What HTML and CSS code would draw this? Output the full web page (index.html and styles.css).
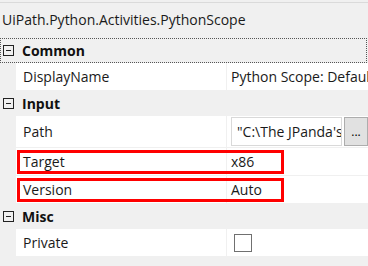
FILE: index.html
```html
<!DOCTYPE html>
<html lang="en">
<head>
    <meta charset="UTF-8">
    <title>Properties</title>
    <link rel="stylesheet" href="styles.css">
</head>
<body>
    <div class="panel">
        <div class="title">UiPath.Python.Activities.PythonScope</div>

        <div class="category focused">
            <span class="toggle"></span>
            <span class="cat-name">Common</span>
        </div>
        <div class="row">
            <div class="name">DisplayName</div>
            <div class="value">Python Scope: Default</div>
        </div>

        <div class="category">
            <span class="toggle"></span>
            <span class="cat-name">Input</span>
        </div>
        <div class="row row-tall">
            <div class="name">Path</div>
            <div class="value">
                <div class="textbox">"C:\The JPanda's</div>
                <button class="dots">...</button>
            </div>
        </div>
        <div class="row marked">
            <div class="name">Target</div>
            <div class="value">x86</div>
            <div class="highlight"></div>
        </div>
        <div class="row marked">
            <div class="name">Version</div>
            <div class="value">Auto</div>
            <div class="highlight"></div>
        </div>

        <div class="category">
            <span class="toggle"></span>
            <span class="cat-name">Misc</span>
        </div>
        <div class="row">
            <div class="name">Private</div>
            <div class="value"><span class="checkbox"></span></div>
        </div>
    </div>
</body>
</html>
```

FILE: styles.css
```css
body {
    margin: 0;
    background: #f0f0f0;
    font-family: 'Open Sans', 'Noto Sans', sans-serif;
    font-size: 14px;
    color: #1a1a1a;
}

.panel {
    width: 368px;
    overflow: hidden;
}

.title {
    margin-top: 2px;
    border-top: 1px solid #dadada;
    height: 35px;
    line-height: 33px;
    padding-left: 2px;
    white-space: nowrap;
}

.category {
    display: flex;
    align-items: center;
    height: 25px;
    box-sizing: border-box;
    border: 1px solid transparent;
    width: 367px;
}

.category.focused {
    border: 1px dotted #555;
}

.toggle {
    width: 9px;
    height: 9px;
    border: 1px solid #222;
    margin-left: 2px;
    margin-right: 8px;
    position: relative;
}

.toggle::after {
    content: '';
    position: absolute;
    left: 2px;
    right: 2px;
    top: 4px;
    height: 1px;
    background: #222;
}

.cat-name {
    font-weight: 700;
    color: #111;
}

.row {
    display: flex;
    margin-left: 16px;
    height: 27px;
    background: #fff;
    border-bottom: 1px solid #f0f0f0;
    position: relative;
}

.row-tall {
    height: 31px;
}

.name {
    width: 203px;
    padding-left: 7px;
    border-right: 1px solid #f0f0f0;
    display: flex;
    align-items: center;
    white-space: nowrap;
}

.value {
    flex: 1;
    display: flex;
    align-items: center;
    padding-left: 4px;
    white-space: nowrap;
    overflow: hidden;
}

.textbox {
    width: 111px;
    height: 29px;
    box-sizing: border-box;
    border: 1px solid #d9d9d9;
    padding-left: 5px;
    line-height: 27px;
    overflow: hidden;
    flex-shrink: 0;
}

.dots {
    width: 24px;
    height: 29px;
    margin-left: 2px;
    border: 1px solid #adadad;
    background: #e1e1e1;
    font-family: inherit;
    font-size: 12px;
    padding: 0;
    flex-shrink: 0;
}

.checkbox {
    width: 16px;
    height: 16px;
    border: 1px solid #707070;
    margin-left: 3px;
}

/* red annotation boxes drawn over the rows */
.highlight {
    position: absolute;
    left: 1px;
    top: 2px;
    width: 261px;
    height: 18px;
    border: 3px solid #f00;
}
```
